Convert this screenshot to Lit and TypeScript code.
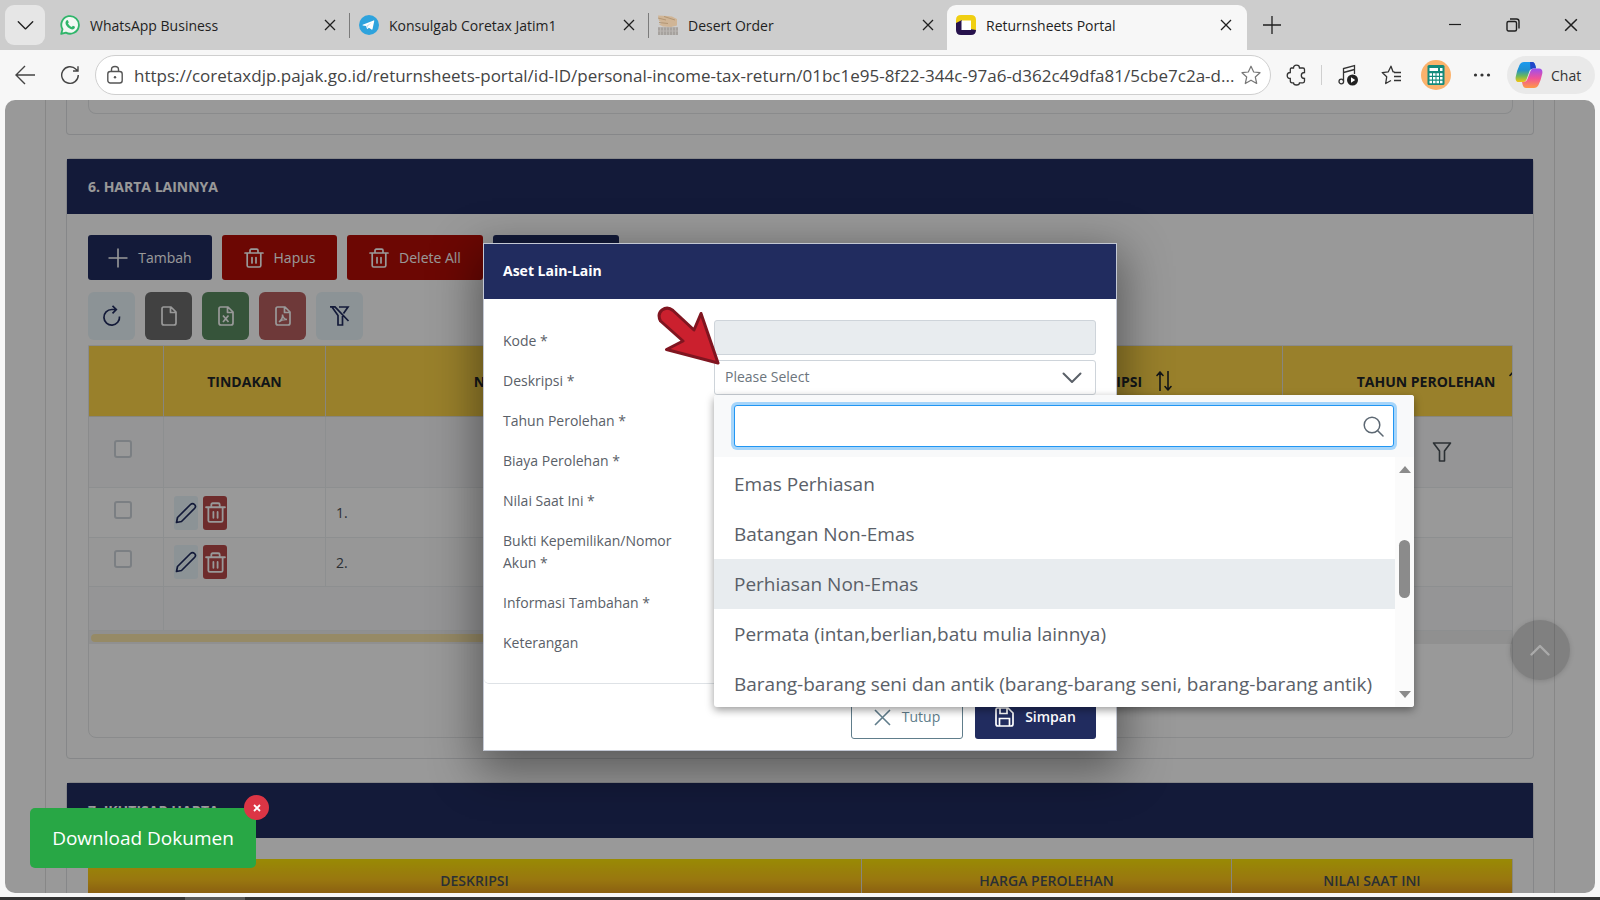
import { LitElement, html, css, svg, nothing } from "lit";
import { customElement } from "lit/decorators.js";

const icon = (w: number, h: number, body: unknown, box = `0 0 ${w} ${h}`) =>
  html`<svg class="icon" width=${w} height=${h} viewBox=${box} fill="none" stroke="currentColor" aria-hidden="true">${body}</svg>`;

const icons = {
  close: (s = 12) => icon(s, s, svg`<path d="M1 1 11 11M11 1 1 11" stroke-width="1.3"/>`, "0 0 12 12"),
  chevron: (w: number, sw = 1.6) => icon(w, w, svg`<path d="M1.5 5.5 10 14 18.500 5.500" stroke-width=${sw} stroke-linecap="round" stroke-linejoin="round"/>`, "0 0 20 20"),
  trash: (s: number) => icon(s, s, svg`<path d="M1 5H19M3.200 5V17.500Q3.200 19 4.700 19H15.300Q16.800 19 16.800 17.500V5M6 5V2.500Q6 1.200 7.300 1.200H12.700Q14 1.200 14 2.500V5M8 9.500V15M12 9.500V15" stroke-width="1.700" stroke-linecap="round"/>`, "0 0 20 20"),
  doc: (inner: unknown) => icon(18, 20, svg`<path d="M3.500 1H11L16 6V17Q16 19 14 19H4Q2 19 2 17V3Q2 1 3.500 1ZM10.500 1V6.500H16" stroke-width="1.700" stroke-linejoin="round"/>${inner}`),
  sort: () => icon(20, 20, svg`<path d="M6 19.500V1M3 4.500 6 1 9 4.500M14 .5V19M11 15.500 14 19 17 15.500" stroke-width="1.600" stroke-linecap="round" stroke-linejoin="round"/>`),
  pencil: () => icon(22, 22, svg`<path d="M1.500 20.500 2.500 15.500 15.500 2.500Q17.500.500 19.500 2.500T19.500 6.500L6.500 19.500Z" stroke-width="1.700" stroke-linejoin="round"/>`),
};

const whatsapp = html`<svg width="20" height="20" viewBox="0 0 20 20" aria-hidden="true">
  <path d="M1.200 18.900 2.500 14.300A8.800 8.800 0 1 1 5.900 17.600Z" fill="#f1f8f3" stroke="#2fb56a" stroke-width="1.800" stroke-linejoin="round"/>
  <path d="M6.700 5.300Q7.600 4.700 8.100 5.700L8.700 7.200Q8.700 7.800 7.900 8.600 9.300 11 11.700 11.900L12.700 10.900Q13 10.700 15 11.800 15.200 13.600 13.300 14.300C10.400 15.100 5.200 10.800 5.500 7.400Q5.700 6 6.700 5.300Z" fill="#2fb56a"/></svg>`;
const telegram = html`<svg width="20" height="20" viewBox="0 0 20 20" aria-hidden="true">
  <circle cx="10" cy="10" r="10" fill="#2ea3dd"/>
  <path d="M3.700 9.800 14.600 5.400Q15.400 5.200 15.200 6.200L13.500 14.300Q13.200 15 12.500 14.600L9.900 12.700 8.500 14Q8 14.300 7.900 13.600L7 10.900 3.800 10.400Q3.200 10.100 3.700 9.800Z" fill="#fff"/>
  <path d="M7.300 10.900 12.500 7.500 8.600 11.400 8.400 13.600Z" fill="#b7dcf0"/></svg>`;
const desert = html`<svg width="20" height="20" viewBox="0 0 20 20" aria-hidden="true">
  <path d="M0 .5 9 1 14 1.500 19 4V10.500L13 12 5 11.500 1 9.500 4 7.500 1 6Z" fill="#d0b596"/>
  <path d="M0 3 8 5M6 1.500 17 5M1 7.500 10 8.500" stroke="#b39674" stroke-width="1"/>
  <rect y="12" width="20" height="8" fill="#b9b6b2"/>
  <path d="M1 12.500V15.500M4 12.500V15.500M7 12.500V15.500M10 12.500V15.500M13 12.500V15.500M16 12.500V15.500M19 12.500V15.500M1 16.500V20M4 16.500V20M7 16.500V20M10 16.500V20M13 16.500V20M16 16.500V20M19 16.500V20" stroke="#9c9894" stroke-width="1.300"/></svg>`;
const portal = html`<svg width="20" height="20" viewBox="0 0 20 20" aria-hidden="true">
  <path d="M5 0H15Q20 0 20 5V16L14 13.500V6H6L0 8.500V5Q0 0 5 0Z" fill="#f0cf12"/>
  <path d="M0 8 6 5V14H14L20 15Q20 20 15 20H5Q0 20 0 15Z" fill="#27124d"/>
  <rect x="5.500" y="5.500" width="9.500" height="9.500" fill="#fff"/></svg>`;
const copilot = html`<svg width="28" height="28" viewBox="0 0 28 28" aria-hidden="true">
  <defs>
    <linearGradient id="ca" x1="0" y1="0" x2="0" y2="1"><stop offset="0" stop-color="#1a9af0"/><stop offset=".4" stop-color="#1f8fd0"/><stop offset=".7" stop-color="#6bb85a"/><stop offset="1" stop-color="#f3c512"/></linearGradient>
    <linearGradient id="cb" x1="0" y1="0" x2="0" y2="1"><stop offset="0" stop-color="#9b4ff0"/><stop offset=".5" stop-color="#f0529a"/><stop offset="1" stop-color="#ff9a45"/></linearGradient>
  </defs>
  <path d="M9 1H17Q19.500 1 20.500 5L21 7H18Q15.500 7 14.500 10L11.500 18.500Q10.500 21 8 21H4Q0 21 .7 16Q2 9 4.500 4Q6 1 9 1Z" fill="url(#ca)"/>
  <path d="M15 1H17.500Q19.500 1 20.500 5L21 7.500H18Q16.500 7.500 15.500 9Z" fill="#2147c9"/>
  <path d="M18.500 7.500H24Q28 7.500 27.300 12.500 26 19 23.500 24 22 27 19 27H11Q8.500 27 7.700 24L7 21H8.500Q11.500 21 12.500 18L15.500 10Q16.500 7.500 18.500 7.500Z" fill="url(#cb)"/></svg>`;

const TABS = [
  { title: "WhatsApp Business", mark: whatsapp },
  { title: "Konsulgab Coretax Jatim1", mark: telegram },
  { title: "Desert Order", mark: desert },
  { title: "Returnsheets Portal", mark: portal, active: true },
];

@customElement("browser-chrome")
class BrowserChrome extends LitElement {
  static styles = css`
    :host { display: block; flex: none; color: #1f1f1f; }
    button { font: inherit; color: inherit; border: 0; padding: 0; background: none; display: grid; place-items: center; }
    svg { display: block; flex: none; }
    .tabs { display: flex; align-items: flex-start; height: 50px; background: #cdcdcd; padding-left: 5px; box-sizing: border-box; padding-top: 5px; }
    .menu { width: 40px; height: 40px; background: #e6e6e6; border-radius: 9px; }
    .tab { display: flex; align-items: center; width: 299px; height: 40px; padding: 0 13px 0 10px; box-sizing: border-box; font-size: 14px; }
    .tab:first-of-type { margin-left: 5px; }
    .tab .name { flex: 1; margin-left: 10px; white-space: nowrap; }
    .tab.lined { position: relative; }
    .tab.lined::after { content: ""; position: absolute; right: -1px; top: 8px; height: 25px; width: 1px; background: #7b7b7b; }
    .tab.active { background: #f7f7f7; height: 45px; border-radius: 9px 9px 0 0; padding: 0 15px 5px 9px; width: 300px; }
    .add { width: 20px; height: 40px; margin-left: 15px; }
    .window { margin-left: auto; display: flex; }
    .window button { width: 58px; height: 40px; }
    .bar { display: flex; align-items: center; height: 50px; background: #f7f7f7; padding: 0 5px 0 15px; }
    .bar > button { color: #444; }
    .reload { margin: 0 15px 0 25px; }
    .address { flex: 1; min-width: 0; display: flex; align-items: center; height: 40px; box-sizing: border-box; border: 1px solid #cfcfcf; border-radius: 20px; background: #fff; padding: 0 9px 0 10px; color: #555; }
    .address input { flex: 1; min-width: 0; margin: 0 2px 0 10px; border: 0; padding: 0; outline: 0; background: none; color: #444; font: inherit; font-size: 17px; text-overflow: ellipsis; }
    .tools { display: flex; align-items: center; color: #333; }
    .tools > * { flex: none; }
    .ext { margin-left: 15px; }
    .rule { width: 1px; height: 20px; background: #cfcfcf; margin: 0 16px 0 15px; }
    .fav { margin: 0 19px 0 23px; }
    .calc { width: 30px; height: 30px; border-radius: 50%; background: #fbb26c; }
    .dots { margin: 0 16px 0 22px; }
    .tools .chat { display: flex; align-items: center; gap: 8px; height: 38px; width: 88px; box-sizing: border-box; padding-left: 8px; border-radius: 19px; background: #e9e9e9; font-size: 14px; }
  `;
  render() {
    return html`
      <div class="tabs">
        <button class="menu" aria-label="Tab actions">${icons.chevron(17, 1.6)}</button>
        ${TABS.map((t, i) => html`
          <div class="tab ${t.active ? "active" : ""} ${i < 2 ? "lined" : ""}">
            ${t.mark}<span class="name">${t.title}</span>
            <button aria-label="Close tab">${icons.close(12)}</button>
          </div>`)}
        <button class="add" aria-label="New tab">${icon(20, 20, svg`<path d="M10 1V19M1 10H19" stroke-width="1.300"/>`)}</button>
        <div class="window">
          <button aria-label="Minimize">${icon(14, 14, svg`<path d="M1 6.500H13" stroke-width="1.200"/>`)}</button>
          <button aria-label="Restore">${icon(14, 14, svg`<rect x="1" y="3.500" width="9.500" height="9.500" rx="1.500" stroke-width="1.400"/><path d="M4 1H10.500Q13 1 13 3.500V10.500" stroke-width="1.400"/>`)}</button>
          <button aria-label="Close window">${icons.close(14)}</button>
        </div>
      </div>
      <div class="bar">
        <button aria-label="Back">${icon(20, 20, svg`<path d="M10 1 1 10 10 19M1 10H20" stroke-width="1.400"/>`)}</button>
        <button class="reload" aria-label="Reload">${icon(20, 20, svg`<path d="M18.300 10A8.300 8.300 0 1 1 16 4.300L17.800 6M18 1.200V6H13" stroke-width="1.400"/>`)}</button>
        <div class="address">
          ${icon(18, 20, svg`<rect x="1.800" y="6.500" width="14.400" height="11.500" rx="2.500" stroke-width="1.400"/><path d="M5.500 6.500V4.500Q5.500 1.500 9 1.500T12.500 4.500V6.500" stroke-width="1.400"/><circle cx="9" cy="12.200" r="1.200" fill="currentColor" stroke="none"/>`)}
          <input type="text" aria-label="Address" value="https://coretaxdjp.pajak.go.id/returnsheets-portal/id-ID/personal-income-tax-return/01bc1e95-8f22-344c-97a6-d362c49dfa81/5cbe7c2a-d..." />
          ${icon(20, 20, svg`<path d="M10 1.200 12.700 7 19 7.700 14.300 12 15.700 18.500 10 15.200 4.300 18.500 5.700 12 1 7.700 7.300 7Z" stroke="#777" stroke-width="1.200" stroke-linejoin="round"/>`)}
        </div>
        <div class="tools">
          <button class="ext" aria-label="Extensions">${icon(20, 22, svg`<path d="M5 4H7.500Q7.500 1.200 10.500 1.200T13.500 4H17Q18.500 4 18.500 5.500V8.500Q15.300 8.500 15.300 11.500T18.500 14.500V17Q18.500 18.800 17 18.800H13.500Q13.500 21 10.500 21T7.500 18.800H6Q4.300 18.800 4.300 17V14.500Q1.200 14.500 1.200 11.500T4.300 8.500V5.500Q4.300 4 5.500 4" stroke-width="1.300"/>`)}</button>
          <span class="rule"></span>
          <button aria-label="Media">${icon(20, 22, svg`<path d="M5.500 17V4.500L16.500 1.500V10M5.500 8.500 16.500 5.500" stroke-width="1.300"/><circle cx="3.300" cy="17.500" r="2.300" stroke-width="1.300"/><circle cx="14.500" cy="16" r="5.500" fill="#222" stroke="none"/><path d="M13 13.300V18.700L17.200 16Z" fill="#fff" stroke="none"/>`)}</button>
          <button class="fav" aria-label="Favorites">${icon(21, 20, svg`<path d="M13.500 6.800 12 6.800 10 1.200 7.300 6.800 1.200 7.600 5.700 11.800 4.700 18.500 10 15.500M13 7.500H20M13 11.500H20M13 15.500H20" stroke-width="1.300" stroke-linejoin="round"/>`)}</button>
          <button class="calc" aria-label="Profile">${icon(18, 20, svg`<rect x=".5" y="0" width="17" height="20" rx="1.500" fill="#148a7c" stroke="none"/><path d="M2.500 4.500H11M13 4.500H15.500" stroke="#fff" stroke-width="3"/><path d="M2.500 9.500H15.500M2.500 13.300H15.500M2.500 17H15.500" stroke="#fff" stroke-width="2.400" stroke-dasharray="2.500 1"/>`)}</button>
          <button class="dots" aria-label="Settings">${icon(18, 6, svg`<g fill="#333" stroke="none"><circle cx="2.500" cy="3" r="1.600"/><circle cx="9" cy="3" r="1.600"/><circle cx="15.500" cy="3" r="1.600"/></g>`)}</button>
          <button class="chat">${copilot}<span>Chat</span></button>
        </div>
      </div>`;
  }
}

const ACTIONS = [
  { kind: "navy w1", label: "Tambah", mark: icon(20, 20, svg`<path d="M10 .5V19.500M.5 10H19.500" stroke-width="1.600"/>`) },
  { kind: "red w2", label: "Hapus", mark: icons.trash(20) },
  { kind: "red w3", label: "Delete All", mark: icons.trash(20) },
  { kind: "navy w4", label: "", mark: nothing },
];

const EXPORTS = [
  { kind: "pale", label: "Refresh", mark: icon(20, 22, svg`<path d="M17.500 11.500A7.800 7.800 0 1 1 9.700 4.500H13.500M10.500 .8 14.300 4.500 10.500 8.300" stroke-width="1.700"/>`) },
  { kind: "grey", label: "CSV", mark: icons.doc(nothing) },
  { kind: "green", label: "Excel", mark: icons.doc(svg`<path d="M6 9.500 11.500 16M11.500 9.500 6 16" stroke-width="1.700"/>`) },
  { kind: "rose", label: "PDF", mark: icons.doc(svg`<path d="M5 16Q9 13 8.500 8.500 9 13 13 13.500 8 13 5 16" stroke-width="1.500"/>`) },
  { kind: "pale", label: "Clear filter", mark: icon(22, 22, svg`<path d="M10 2H19L14.500 8.500M3 2 9 10.500V20H13.500V11M1 1.800H6L19.500 16" stroke-width="1.700"/>`) },
];

@customElement("asset-sheet")
class AssetSheet extends LitElement {
  static styles = css`
    :host { display: block; margin: 0 40px; padding: 0 20px; border: solid #e2e2e2; border-width: 0 1px; color: #495057; font-size: 14px; }
    button { font: inherit; color: inherit; border: 0; padding: 0; margin: 0; }
    svg { display: block; flex: none; }
    .card { border: 1px solid #e0e2e4; border-radius: 4px; margin-bottom: 23px; }
    .card.tail { border-top: 0; padding: 0 20px 20px 21px; border-radius: 0 0 4px 4px; }
    .card.tail div { height: 13px; border: 1px solid #e6e8ea; border-top: 0; border-radius: 0 0 8px 8px; }
    h2 { margin: 0; height: 55px; box-sizing: border-box; padding: 0 21px; background: #212c5f; color: #fff; font-size: 14px; font-weight: 700; display: flex; align-items: center; }
    .body { padding: 21px 20px 20px 21px; }
    .row { display: flex; gap: 10px; }
    .row + .row { margin: 12px 0 5px; }
    .act { display: flex; align-items: center; justify-content: center; gap: 10px; height: 45px; border-radius: 3px; color: #fff; box-sizing: border-box; }
    .navy { background: #212c5f; } .red { background: #b50d05; }
    .w1 { width: 124px; } .w2 { width: 115px; } .w3 { width: 136px; } .w4 { width: 126px; }
    .exp { display: grid; place-items: center; width: 47px; height: 48px; border-radius: 6px; color: #fff; }
    .exp.pale { background: #e9f5fa; color: #212c5f; }
    .grey { background: #6d6d6d; } .green { background: #5a8c61; } .rose { background: #b86060; }
    .panel { border: 1px solid #e6e8ea; border-radius: 0 0 8px 8px; overflow: hidden; height: 391px; }
    .assets { table-layout: fixed; border-collapse: separate; border-spacing: 0; width: 1513px; background: #fff; }
    .assets th, .assets td { box-sizing: border-box; padding: 0 10px; border: solid #eceef0; border-width: 0 1px 1px 0; }
    .assets th { height: 71px; background: #ffd549; color: #212529; font-weight: 700; border-color: #e3e0d0; }
    .pick { width: 75px; } .do { width: 162px; } .field { width: 319px; }
    .sorter { display: flex; align-items: center; justify-content: center; gap: 12px; }
    .filter td { height: 71px; background: #f8f9fa; }
    .one td { height: 50px; } .two td { height: 49px; } .two td { background: #fcfcfc; }
    .sum td { height: 44px; background: #f8f9fa; }
    .assets .pick { text-align: center; padding: 0 16px 8px 10px; }
    input { appearance: none; display: inline-block; width: 18px; height: 18px; box-sizing: border-box; margin: 0; border: 2px solid #ced4da; border-radius: 3px; background: #fff; vertical-align: middle; }
    .ops { display: flex; gap: 5px; }
    .ops button { width: 24px; height: 34px; border-radius: 3px; display: grid; place-items: center; }
    .edit { background: #e9f5fa; color: #212c5f; } .drop { background: #b84a4a; color: #fff; }
    .funnel { display: flex; justify-content: flex-end; margin-right: 139px; }
    .track { height: 13px; background: #f1f1f1; padding: 3px 0 0 2px; box-sizing: border-box; }
    .thumb { width: 80%; height: 8px; border-radius: 4px; background: #fbe7aa; }
    .summary { width: 100%; table-layout: fixed; border-collapse: separate; border-spacing: 0; }
    .summary th { height: 42px; border-right: 1px solid #e3e0d0; background: linear-gradient(#ffe708, #ffc61a 50%, #d98a20); color: #495057; font-weight: 600; padding: 0; }
    .summary .a { width: 773px; } .summary .b { width: 369px; }
  `;
  private sorter(text: string) {
    return html`<th class="field"><span class="sorter">${text}${icons.sort()}</span></th>`;
  }
  private dataRow(n: number, cls: string) {
    return html`<tr class=${cls}>
      <td class="pick"><input type="checkbox" aria-label="Pilih baris ${n}" /></td>
      <td><div class="ops">
        <button class="edit" aria-label="Ubah">${icons.pencil()}</button>
        <button class="drop" aria-label="Hapus">${icons.trash(21)}</button></div></td>
      <td>${n}.</td><td></td><td></td><td></td></tr>`;
  }
  render() {
    return html`
      <section class="card tail"><div></div></section>
      <section class="card">
        <h2>6. HARTA LAINNYA</h2>
        <div class="body">
          <div class="row">${ACTIONS.map(a => html`<button class="act ${a.kind}">${a.mark}${a.label ? html`<span>${a.label}</span>` : nothing}</button>`)}</div>
          <div class="row">${EXPORTS.map(e => html`<button class="exp ${e.kind}" aria-label=${e.label}>${e.mark}</button>`)}</div>
          <div class="panel">
            <table class="assets">
              <thead><tr><th class="pick"></th><th class="do">TINDAKAN</th><th class="field">NO</th>${this.sorter("KODE")}${this.sorter("DESKRIPSI")}${this.sorter("TAHUN PEROLEHAN")}</tr></thead>
              <tbody>
                <tr class="filter"><td class="pick"><input type="checkbox" aria-label="Pilih semua" /></td><td></td><td></td><td></td><td></td>
                  <td><div class="funnel">${icon(20, 20, svg`<path d="M1.500 1H18.500L12.500 9V19H7.500V9Z" stroke-width="1.600" stroke-linejoin="round"/>`)}</div></td></tr>
                ${this.dataRow(1, "one")}${this.dataRow(2, "two")}
                <tr class="sum"><td></td><td colspan="5"></td></tr>
              </tbody>
            </table>
            <div class="track"><div class="thumb"></div></div>
          </div>
        </div>
      </section>
      <section class="card">
        <h2>7. IKHTISAR HARTA</h2>
        <div class="body">
          <table class="summary"><thead><tr><th class="a">DESKRIPSI</th><th class="b">HARGA PEROLEHAN</th><th>NILAI SAAT INI</th></tr></thead></table>
        </div>
      </section>`;
  }
}

const OPTIONS = ["Emas Perhiasan", "Batangan Non-Emas", "Perhiasan Non-Emas", "Permata (intan,berlian,batu mulia lainnya)", "Barang-barang seni dan antik (barang-barang seni, barang-barang antik)"];
const REST = ["Tahun Perolehan *", "Biaya Perolehan *", "Nilai Saat Ini *", "Bukti Kepemilikan/Nomor Akun *", "Informasi Tambahan *", "Keterangan"];

@customElement("asset-dialog")
class AssetDialog extends LitElement {
  static styles = css`
    :host { display: block; position: relative; width: 634px; max-width: 100%; box-sizing: border-box; background: #fff; border: 1px solid #c3c8d4; color: #5a6068; font-size: 14px; line-height: 22px; box-shadow: 0 14px 44px 6px rgba(0, 0, 0, .42); }
    svg { display: block; flex: none; }
    h2 { margin: 0; height: 55px; padding: 0 19px; display: flex; align-items: center; background: #212c5f; color: #fff; font-size: 14px; font-weight: 700; }
    .form { padding: 21px 20px 21px 19px; border-bottom: 1px solid #dee2e6; border-radius: 0 0 5px 5px; }
    .line { display: grid; grid-template-columns: 211px 1fr; align-items: start; }
    label { padding: 10px 25px 8px 0; }
    .line input, .line select { width: 100%; height: 35px; box-sizing: border-box; border: 1px solid #ced4da; border-radius: 3px; background: #fff; margin: 0; font: inherit; color: #6c757d; }
    .line input:disabled { background: #e8ecef; }
    .choose { position: relative; }
    .choose select { appearance: none; padding: 0 10px; }
    .choose > svg { position: absolute; right: 14px; top: 8px; pointer-events: none; }
    .list { position: absolute; z-index: 2; left: 0; top: 35px; width: 700px; background: #fff; box-shadow: 0 3px 8px rgba(0, 0, 0, .4); border-radius: 3px; overflow: hidden; }
    .search { position: relative; background: #f8f9fa; padding: 10px 20px; }
    .search input { height: 42px; border: 1px solid #2196f3; outline: 0; box-shadow: 0 0 0 3px #a6d5fa; display: block; font-size: 18px; padding: 0 40px 0 12px; }
    .search svg { position: absolute; right: 30px; top: 21px; color: #5d6873; }
    .scroll { display: flex; height: 250px; }
    ul { flex: 1; list-style: none; margin: 0; padding: 2px 0 0; overflow: hidden; }
    li { height: 50px; line-height: 50px; padding-left: 20px; font-size: 19px; white-space: nowrap; }
    li.on { background: #e8ecef; }
    .gutter { width: 19px; background: #fbfbfb; display: flex; flex-direction: column; align-items: center; padding: 9px 0; box-sizing: border-box; }
    .knob { width: 11px; height: 58px; border-radius: 6px; background: #8b8b8b; margin: 67px 0 auto; }
    .foot { display: flex; justify-content: flex-end; gap: 12px; padding: 12px 20px 11px; }
    .foot button { height: 43px; display: flex; align-items: center; justify-content: center; gap: 11px; font: inherit; border-radius: 3px; padding: 0; box-sizing: border-box; }
    .shut { width: 112px; background: #fff; border: 1px solid #607d8b; color: #607d8b; }
    .save { width: 121px; background: #212c5f; border: 0; color: #fff; }
    .save span { font-weight: 600; }
    .pointer { position: absolute; z-index: 3; left: 172px; top: 61px; }
  `;
  render() {
    return html`
      <h2>Aset Lain-Lain</h2>
      <div class="form">
        <div class="line"><label for="kode">Kode *</label><input id="kode" type="text" disabled /></div>
        <div class="line"><label for="desk">Deskripsi *</label>
          <div class="choose">
            <select id="desk"><option>Please Select</option></select>${icons.chevron(20, 2)}
            <div class="list">
              <div class="search"><input type="text" aria-label="Cari" />${icon(21, 21, svg`<circle cx="9" cy="9" r="7.800" stroke-width="1.500"/><path d="M14.500 14.500 20 20" stroke-width="1.500" stroke-linecap="round"/>`)}</div>
              <div class="scroll">
                <ul role="listbox" aria-label="Deskripsi">${OPTIONS.map((o, i) => html`<li role="option" class=${i === 2 ? "on" : ""}>${o}</li>`)}</ul>
                <div class="gutter">
                  <svg width="12" height="7"><path d="M0 7 6 0 12 7Z" fill="#8b8b8b"/></svg>
                  <div class="knob"></div>
                  <svg width="12" height="7"><path d="M0 0 6 7 12 0Z" fill="#8b8b8b"/></svg>
                </div>
              </div>
            </div>
          </div></div>
        ${REST.map((t, i) => html`<div class="line"><label for="f${i}">${t}</label><input id="f${i}" type="text" /></div>`)}
      </div>
      <div class="foot">
        <button class="shut">${icon(17, 17, svg`<path d="M1 1 16 16M16 1 1 16" stroke-width="1.600"/>`)}<span>Tutup</span></button>
        <button class="save">${icon(19, 20, svg`<path d="M2.500 1H13L18 6V17Q18 19 16 19H3Q1 19 1 17V2.500Q1 1 2.500 1ZM5 1V6.500H12V1M4.500 19V11.500H14.500V19" stroke-width="1.700"/>`)}<span>Simpan</span></button>
      </div>
      <svg class="pointer" width="64" height="60" viewBox="0 0 64 60" aria-hidden="true">
        <path d="M17 5.500 38 25 45 8.500 62 58 10.500 44.500 27 36 4.500 16Q1 9 6 5 11.500 1 17 5.500Z" fill="#cb202e" stroke="#801520" stroke-width="3" stroke-linejoin="round"/></svg>`;
  }
}

@customElement("app-root")
class AppRoot extends LitElement {
  static styles = css`
    :host { display: flex; flex-direction: column; height: 100vh; overflow: hidden; background: #f7f7f7; font-family: "Open Sans", "Noto Sans", sans-serif; }
    .page { position: relative; flex: 1; min-height: 0; overflow: hidden; margin: 0 5px 4px; border-radius: 10px; background: #fff; }
    .mask { position: absolute; inset: 0; background: rgba(0, 0, 0, .4); display: flex; align-items: center; justify-content: center; }
    .top { position: absolute; right: 25px; bottom: 213px; width: 60px; height: 60px; border: 0; border-radius: 50%; background: rgba(0, 0, 0, .16); color: #aaa; display: grid; place-items: center; padding: 0; box-shadow: 0 1px 5px rgba(0, 0, 0, .15); }
    .top svg { rotate: 180deg; }
    .save { position: absolute; left: 25px; bottom: 25px; }
    .save button { font: inherit; border: 0; color: #fff; }
    .download { display: block; width: 226px; height: 60px; border-radius: 5px; background: #28a745; padding: 0; }
    .save .download { font-size: 19px; }
    .save .dismiss { position: absolute; right: -13px; top: -13px; width: 25px; height: 25px; border-radius: 50%; background: #dc3545; padding: 0; display: grid; place-items: center; }
    .task { flex: none; height: 3px; background: #333; padding-left: 185px; }
    .task i { display: block; width: 60px; height: 3px; background: #5a5a5a; }
  `;
  render() {
    return html`
      <browser-chrome></browser-chrome>
      <main class="page">
        <asset-sheet></asset-sheet>
        <div class="mask"><asset-dialog></asset-dialog></div>
        <button class="top" aria-label="Ke atas">${icons.chevron(20, 2.4)}</button>
        <div class="save">
          <button class="download">Download Dokumen</button>
          <button class="dismiss" aria-label="Tutup">${icon(8, 8, svg`<path d="M1 1 7 7M7 1 1 7" stroke-width="1.800"/>`)}</button>
        </div>
      </main>
      <div class="task"><i></i></div>`;
  }
}
